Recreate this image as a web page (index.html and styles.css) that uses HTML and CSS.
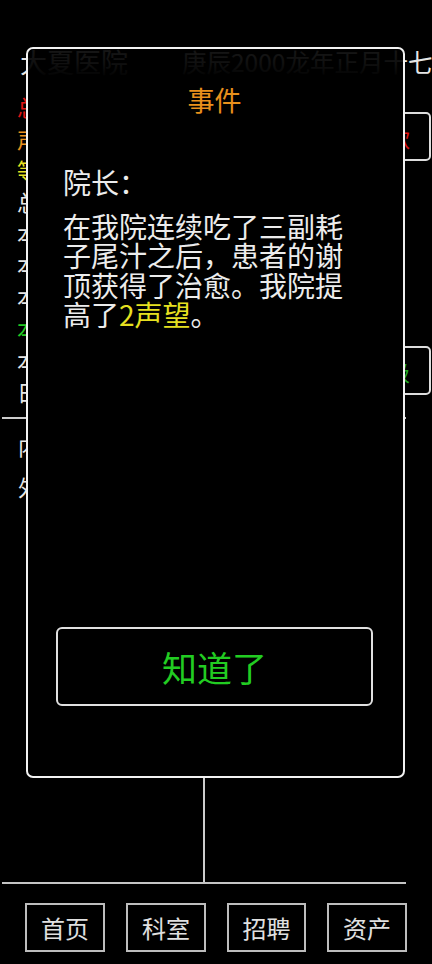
FILE: index.html
```html
<!DOCTYPE html>
<html lang="zh">
<head>
<meta charset="utf-8">
<link rel="stylesheet" href="styles.css">
</head>
<body>
<div class="page">
  <header class="top">
    <span class="name">大夏医院</span>
    <span class="date">庚辰2000龙年正月十七</span>
  </header>
  <section class="info">
    <div class="rows">
      <div class="row red">总资产：12000</div>
      <div class="row orange">声望：32</div>
      <div class="row yellow">等级：一级医院</div>
      <div class="row">总床位：20</div>
      <div class="row">本月收入：3200</div>
      <div class="row">本月支出：2100</div>
      <div class="row">本月病人：46</div>
      <div class="row green">本月利润：1100</div>
      <div class="row">本年利润：1100</div>
      <div class="row">日常开销：70</div>
    </div>
    <div class="side">
      <div class="sbtn sred">贷款</div>
      <div class="sbtn sgreen">升级</div>
    </div>
  </section>
  <section class="board">
    <div class="col left">
      <div class="dept">内科</div>
      <div class="dept">外科</div>
    </div>
    <div class="col right"></div>
  </section>
  <nav class="nav">
    <div class="navbtn">首页</div>
    <div class="navbtn">科室</div>
    <div class="navbtn">招聘</div>
    <div class="navbtn">资产</div>
  </nav>
</div>

<div class="modal">
  <div class="title">事件</div>
  <div class="who">院长：</div>
  <p class="msg">在我院连续吃了三副耗子尾汁之后，患者的谢顶获得了治愈。我院提高了<span class="hl">2声望</span>。</p>
  <div class="ok">知道了</div>
</div>
</body>
</html>
```

FILE: styles.css
```css
html, body {
  margin: 0;
  padding: 0;
  background: #000;
}
body {
  width: 432px;
  height: 964px;
  overflow: hidden;
  position: relative;
  font-family: "Noto Sans CJK SC", "Noto Sans", sans-serif;
  color: #e6e6e6;
}
.page {
  height: 964px;
  display: flex;
  flex-direction: column;
}
.top {
  display: flex;
  align-items: center;
  gap: 54px;
  padding: 48px 0 0 20px;
  height: 28px;
  white-space: nowrap;
}
.name {
  font-size: 27px;
  line-height: 28px;
}
.date {
  font-size: 24.5px;
  line-height: 28px;
}
.info {
  display: flex;
  justify-content: space-between;
  margin-top: 15px;
}
.rows {
  padding-left: 17px;
}
.row {
  font-size: 22px;
  line-height: 31.7px;
  height: 31.7px;
  white-space: nowrap;
}
.red { color: #e01515; }
.orange { color: #e8901c; }
.yellow { color: #e6e020; }
.green { color: #22c822; }
.side {
  display: flex;
  flex-direction: column;
  gap: 185px;
  padding-top: 21px;
  margin-right: 1px;
}
.sbtn {
  width: 82px;
  height: 45px;
  border: 2px solid #ddd;
  border-radius: 5px;
  display: flex;
  align-items: center;
  justify-content: center;
  font-size: 22px;
}
.sred { color: #e01515; }
.sgreen { color: #22a822; }
.board {
  flex: 1;
  display: grid;
  grid-template-columns: 203px 203px;
  margin: 9px 0 0 2px;
  border-top: 2px solid #ccc;
  border-bottom: 2px solid #c4c4c4;
  width: 404px;
  box-sizing: border-box;
}
.col.left {
  border-right: 2px solid #ccc;
  padding: 11px 0 0 16px;
  display: flex;
  flex-direction: column;
  gap: 11px;
}
.dept {
  font-size: 22px;
  line-height: 30px;
}
.nav {
  display: flex;
  gap: 21px;
  padding: 19px 0 12px 25px;
}
.navbtn {
  width: 76px;
  height: 45px;
  border: 2px solid #bdbdbd;
  display: flex;
  align-items: center;
  justify-content: center;
  font-size: 24px;
  color: #e0e0e0;
}
.nav .navbtn:nth-child(3) { width: 75px; }

.modal {
  position: absolute;
  left: 26px;
  top: 47px;
  height: 727px;
  border: 2px solid #f2f2f2;
  border-radius: 7px;
  background: linear-gradient(to bottom, rgba(0,0,0,0.9) 0, rgba(0,0,0,0.93) 14px, #000 30px);
  display: flex;
  flex-direction: column;
  padding: 0 30px 0 28px;
  box-sizing: content-box;
  width: 317px;
}
.title {
  margin-top: 33px;
  text-align: center;
  font-size: 27px;
  line-height: 36px;
  color: #e8901c;
}
.who {
  margin-top: 50px;
  padding-left: 7px;
  font-size: 28px;
  line-height: 29px;
  color: #ececec;
}
.msg {
  margin: 15px 0 0 0;
  padding: 0 7px;
  font-size: 28px;
  line-height: 29.4px;
  color: #ececec;
}
.hl { color: #e6e020; }
.ok {
  margin-top: auto;
  margin-bottom: 70px;
  height: 75px;
  border: 2px solid #e0e0e0;
  border-radius: 6px;
  display: flex;
  align-items: center;
  justify-content: center;
  font-size: 35px;
  color: #22cc22;
}
```
